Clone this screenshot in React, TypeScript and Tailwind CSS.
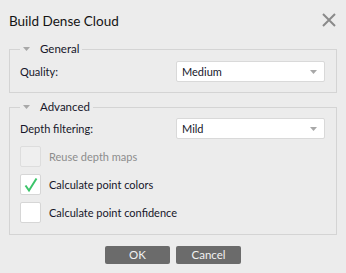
import { ReactNode } from "react";

const Tri = ({ className = "" }: { className?: string }) => (
    <svg width="7" height="4" viewBox="0 0 7 4" className={className}>
        <path d="M0 0 H7 L3.5 4 Z" fill="#a8a8a8" />
    </svg>
);

const Group = ({ title, children, className = "" }: { title: string; children: ReactNode; className?: string }) => (
    <fieldset className={`border border-[#d4d4d4] pl-[10px] pr-[11px] ${className}`}>
        <legend className="px-[3px] h-[16px] flex items-center gap-[10px] leading-[16px] text-[11.5px]">
            <Tri />
            <span>{title}</span>
        </legend>
        {children}
    </fieldset>
);

const Select = ({ value }: { value: string }) => (
    <div className="w-[149px] h-[21px] bg-white border border-[#d9d9d9] rounded-[2px] flex items-center justify-between pl-[5px] pr-[7px]">
        <span>{value}</span>
        <Tri />
    </div>
);

const Check = ({ label, checked = false, disabled = false }: { label: string; checked?: boolean; disabled?: boolean }) => (
    <div className="flex items-center gap-[8px] h-[21px]">
        <div
            className={`w-[21px] h-[21px] rounded-[2px] border flex items-center justify-center ${
                disabled ? "bg-[#efefef] border-[#dddddd]" : "bg-white border-[#d6d6d6]"
            }`}
        >
            {checked && (
                <svg width="14" height="16" viewBox="0 0 14 16">
                    <path d="M1.5 8.5 L5 13.5 L12.5 1.5" fill="none" stroke="#3cc46a" strokeWidth="2" />
                </svg>
            )}
        </div>
        <span className={disabled ? "text-[#8c8c8c]" : ""}>{label}</span>
    </div>
);

const App = () => {
    return (
        <div className="w-[346px] h-[273px] bg-[#ececec] font-['Lato',sans-serif] text-[11px] leading-[16px] text-[#16162a] flex flex-col">
            <div className="h-[41px] flex items-start justify-between pl-[9px] pr-[10px] pt-[12px]">
                <span className="text-[13.5px] leading-[18px] text-[#141414]">Build Dense Cloud</span>
                <svg width="14" height="14" viewBox="0 0 14 14" className="mt-[1px]">
                    <path d="M1 1 L13 13 M13 1 L1 13" stroke="#8a8a8a" strokeWidth="2" />
                </svg>
            </div>

            <div className="px-[9px] flex flex-col">
                <Group title="General" className="pb-[10px]">
                    <div className="flex items-center justify-between mt-[4px]">
                        <span>Quality:</span>
                        <Select value="Medium" />
                    </div>
                </Group>

                <Group title="Advanced" className="mt-[6px] pb-[11px]">
                    <div className="flex flex-col gap-[7px] mt-[3px]">
                        <div className="flex items-center justify-between">
                            <span>Depth filtering:</span>
                            <Select value="Mild" />
                        </div>
                        <Check label="Reuse depth maps" disabled />
                        <Check label="Calculate point colors" checked />
                        <Check label="Calculate point confidence" />
                    </div>
                </Group>
            </div>

            <div className="flex justify-center gap-[6px] mt-[11px]">
                <button className="w-[65px] h-[18px] rounded-[2px] bg-[#6b6b6b] text-[#f2f2f2] text-[11.5px] leading-[18px]">OK</button>
                <button className="w-[65px] h-[18px] rounded-[2px] bg-[#6b6b6b] text-[#f2f2f2] text-[11.5px] leading-[18px]">Cancel</button>
            </div>
        </div>
    );
};

export default App;
